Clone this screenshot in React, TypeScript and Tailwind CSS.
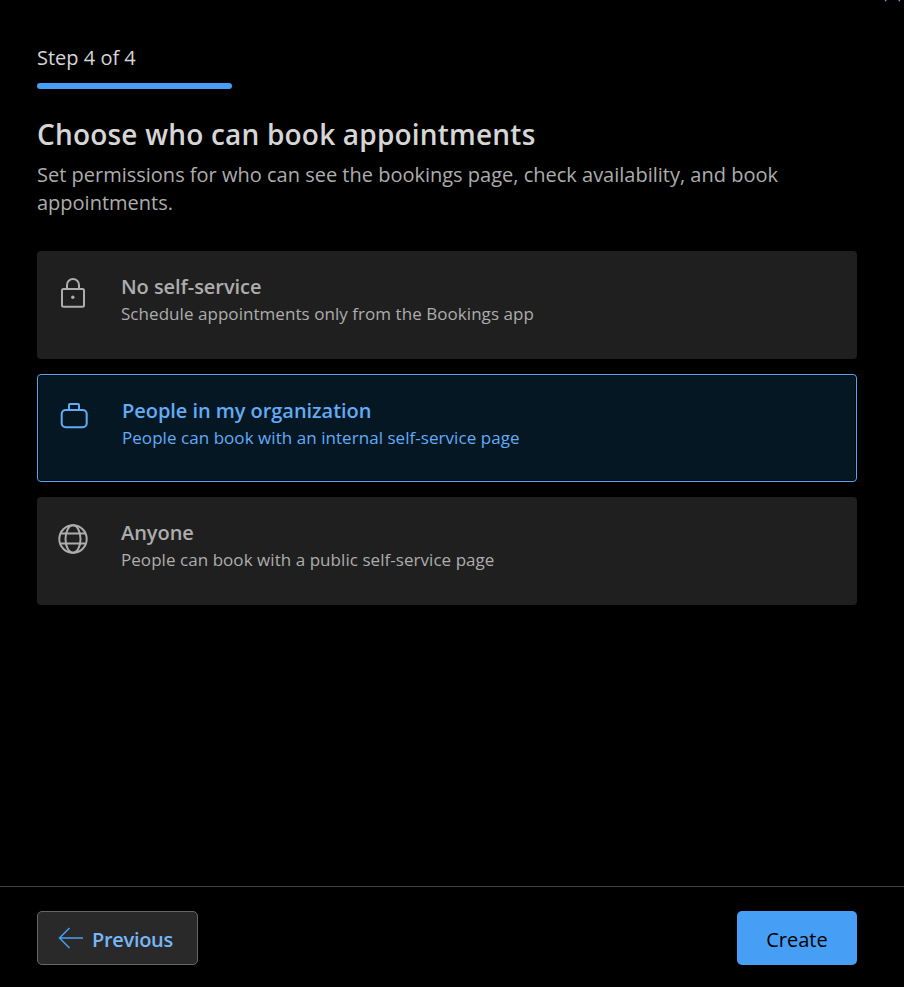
import React from 'react';

type Option = {
  title: string;
  desc: string;
  icon: React.ReactNode;
  selected?: boolean;
};

function LockIcon() {
  return (
    <svg width="32" height="32" viewBox="0 0 32 32" fill="none" stroke="currentColor" strokeWidth="2">
      <path d="M10 12V8a6 6 0 0 1 12 0v4" />
      <rect x="5" y="12" width="22" height="17.7" rx="1.5" />
      <circle cx="15.8" cy="20.3" r="1.7" fill="currentColor" stroke="none" />
    </svg>
  );
}

function BriefcaseIcon() {
  return (
    <svg width="32" height="32" viewBox="0 0 32 32" fill="none" stroke="currentColor" strokeWidth="2">
      <path d="M12 10V5a1 1 0 0 1 1-1h8a1 1 0 0 1 1 1v5" />
      <rect x="4.7" y="10" width="25" height="17.3" rx="4" />
    </svg>
  );
}

function GlobeIcon() {
  return (
    <svg width="32" height="32" viewBox="0 0 32 32" fill="none" stroke="currentColor" strokeWidth="2">
      <circle cx="16" cy="16" r="13.7" />
      <ellipse cx="16" cy="16" rx="7.5" ry="13.7" />
      <path d="M3.5 10.5h25M3.5 20.5h25" />
    </svg>
  );
}

const options: Option[] = [
  { title: 'No self-service', desc: 'Schedule appointments only from the Bookings app', icon: <LockIcon /> },
  { title: 'People in my organization', desc: 'People can book with an internal self-service page', icon: <BriefcaseIcon />, selected: true },
  { title: 'Anyone', desc: 'People can book with a public self-service page', icon: <GlobeIcon /> },
];

function OptionText({ option }: { option: Option }) {
  return (
    <div>
      <div className="text-[20px] leading-[28px] font-semibold tracking-[-0.05px]">{option.title}</div>
      <div className="mt-[2px] text-[17px] leading-[22px] tracking-[0.05px]">{option.desc}</div>
    </div>
  );
}

function OptionCard({ option }: { option: Option }) {
  if (option.selected) {
    return (
      <div className="flex h-[108px] rounded-[4px] border border-[#5aa5ef] bg-[#000b12] p-px">
        <div className="flex flex-1 rounded-[3px] bg-[#061724] pl-[18px] pt-[21px] text-[#62abf5]">
          <div className="mt-[3px] h-[32px] w-[32px] shrink-0">{option.icon}</div>
          <div className="ml-[33px]">
            <OptionText option={option} />
          </div>
        </div>
      </div>
    );
  }
  return (
    <div className="flex h-[108px] rounded-[4px] bg-[#1f1f1f] pl-[20px] pt-[22px] text-[#adadad]">
      <div className="mt-[4px] h-[32px] w-[32px] shrink-0">{option.icon}</div>
      <div className="ml-[32px]">
        <OptionText option={option} />
      </div>
    </div>
  );
}

export default function App() {
  return (
    <div className="relative flex h-[987px] w-[904px] flex-col overflow-hidden bg-black font-['Open_Sans','Noto_Sans',sans-serif]">
      {/* bottom tip of an icon cut off by the window edge */}
      <svg className="absolute right-0 top-0" width="24" height="4" viewBox="0 0 24 4" fill="none" stroke="#479ef5" strokeWidth="1.5">
        <path d="M4 -3 L6 1.2 M21 -3 L19 1.2" />
      </svg>

      <div className="flex-1 pl-[37px] pr-[47px] pt-[44px]">
        <div className="text-[20px] leading-[28px] text-[#d6d6d6]">Step 4 of 4</div>
        <div className="mt-[11px] h-[6px] w-[195px] rounded-[3px] bg-[#479ef5]" />
        <h1 className="mt-[27px] text-[28px] leading-[36px] font-semibold tracking-[0.2px] text-[#d6d6d6]">
          Choose who can book appointments
        </h1>
        <p className="mt-[9px] w-[800px] text-[20px] leading-[28px] text-[#adadad]">
          Set permissions for who can see the bookings page, check availability, and book appointments.
        </p>
        <div className="mt-[34px] flex flex-col gap-[15px]">
          {options.map((o) => (
            <OptionCard key={o.title} option={o} />
          ))}
        </div>
      </div>

      <div className="flex h-[101px] items-start justify-between border-t border-[#424242] pl-[37px] pr-[47px] pt-[24px]">
        <button className="flex h-[54px] w-[161px] items-center rounded-[5px] border border-[#666666] bg-[#292929] pl-[20px] text-[20px] font-semibold tracking-[-0.3px] text-[#77b7f7]">
          <svg width="26" height="24" viewBox="0 0 26 24" fill="none" stroke="#479ef5" strokeWidth="1.5" className="mr-[8px] shrink-0">
            <path d="M1.5 12H25M11.5 2 1.5 12 11.5 22" />
          </svg>
          <span className="mt-[3px]">Previous</span>
        </button>
        <button className="h-[54px] w-[120px] rounded-[5px] bg-[#479ef5] pt-[3px] text-[20px] font-medium text-black">
          Create
        </button>
      </div>
    </div>
  );
}
